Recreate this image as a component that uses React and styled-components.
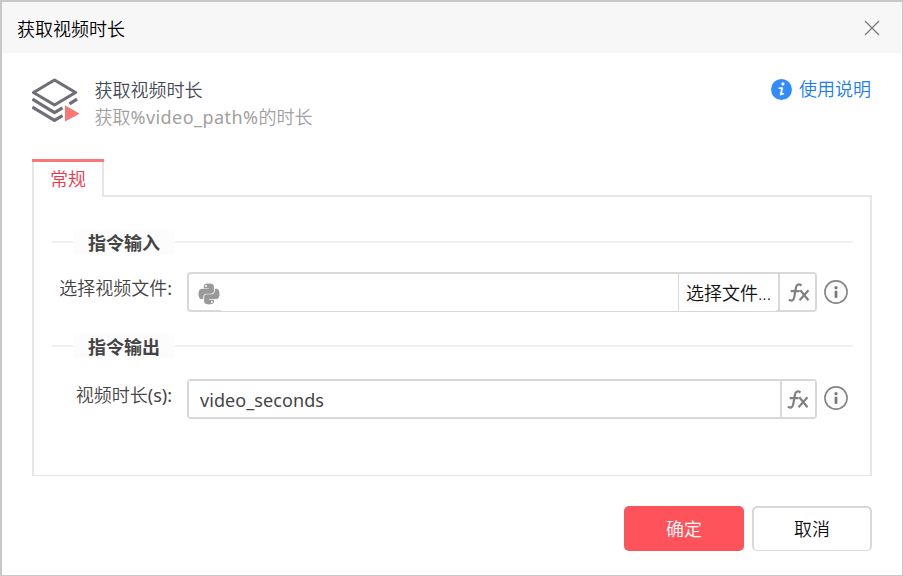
import React from "react";
import styled, { createGlobalStyle } from "styled-components";
import { FaPython } from "react-icons/fa";

const Global = createGlobalStyle`
  * { box-sizing: border-box; }
  body {
    margin: 0;
    background: #fff;
    font-family: "Noto Sans", "Noto Sans CJK SC", sans-serif;
    font-size: 18px;
    line-height: 24px;
    color: #444;
    white-space: nowrap;
  }
  button, input { font: inherit; }
`;

const Dialog = styled.div`
  width: 903px;
  height: 576px;
  background: #fff;
  border: solid #c8c8c8;
  border-width: 2px 1px 1px 2px;
  font-weight: 350;
`;

const TitleBar = styled.header`
  display: flex;
  align-items: center;
  justify-content: space-between;
  height: 51px;
  padding: 2px 22px 0 15px;
  background: #f7f7f7;
  color: #000;
`;

const CloseButton = styled.button`
  display: flex;
  padding: 0;
  margin-top: -1px;
  border: 0;
  background: none;
  color: #777;
`;

const Summary = styled.section`
  display: flex;
  height: 106px;
  padding: 24px 31px 0 30px;
`;

const SummaryText = styled.div`
  flex: 1;
  margin-left: 14.5px;
`;

const Name = styled.div`
  height: 28px;
  padding-top: 1px;
  color: #444955;
`;

const Description = styled.div`
  color: #a0a0a0;
`;

const Latin = styled.span`
  font-weight: 400;
  letter-spacing: ${(p) => p.$tracking || 0}px;
`;

const HelpLink = styled.a`
  display: flex;
  align-items: center;
  gap: 7px;
  height: 24px;
  color: #1a7df5;
`;

const Tabs = styled.div`
  display: flex;
  height: 38px;
  margin: 0 30px;
`;

const Tab = styled.div`
  width: 72px;
  text-align: center;
  color: #f0344a;
  line-height: 34px;
  border-top: 3px solid #fb7676;
  background: linear-gradient(#e6e6e6, #e6e6e6) left / 2px 100% no-repeat,
    linear-gradient(#e6e6e6, #e6e6e6) right / 2px 100% no-repeat;
`;

const TabRule = styled.div`
  flex: 1;
  border-bottom: 2px solid #e6e6e6;
`;

const Panel = styled.main`
  height: 279px;
  margin: 0 30px;
  padding: 33px 17px 0 18px;
  border: solid #e6e6e6;
  border-width: 0 2px 1px 2px;
`;

const SectionTitle = styled.h2`
  display: flex;
  align-items: center;
  height: 24px;
  margin: 0;
  font-size: 18px;
  font-weight: 700;

  &::before,
  &::after {
    content: "";
    height: 2px;
    background: #f0f0f0;
  }
  &::before { width: 21px; }
  &::after { flex: 1; }
`;

const SectionLabel = styled.span`
  width: 102px;
  height: 24px;
  line-height: 26px;
  text-align: center;
  background: #fcfcfc;
`;

const Row = styled.div`
  display: flex;
  align-items: center;
  height: 40px;
  margin: ${(p) => p.$margin};
`;

const Label = styled.label`
  width: 120px;
  margin: -8px 15px 0 0;
  text-align: right;
`;

const Field = styled.div`
  display: flex;
  width: 630px;
  height: 40px;
  border: 2px solid #d8d8d8;
  border-radius: 4px;
  background: #fff;
`;

const PythonBadge = styled.div`
  width: 32px;
  padding: 8px 0 0 8px;
  color: #999;
`;

const Value = styled.input`
  flex: 1;
  min-width: 0;
  padding: ${(p) => (p.$flush ? "0" : "2px 0 0 11px")};
  border: 0;
  outline: 0;
  background: #fff;
  color: #444;
  font-weight: 400;
  letter-spacing: 0.08px;
  margin-bottom: ${(p) => (p.$flush ? "-1px" : "0")};
`;

const Browse = styled.button`
  width: 100px;
  margin-bottom: -1px;
  padding: 1px 0 0;
  border: 0;
  border-left: 1px solid #d8d8d8;
  border-bottom-right-radius: 4px;
  background: #fff;
  color: #111;
`;

const Formula = styled.button`
  display: flex;
  align-items: flex-start;
  width: ${(p) => p.$width}px;
  padding: 8px 0 0 ${(p) => p.$indent}px;
  border: 0;
  border-left: 2px solid #d8d8d8;
  background: #fff;
  color: #808080;
`;

const Info = styled.svg`
  margin: ${(p) => p.$shift}px 0 0 7px;
`;

const Footer = styled.footer`
  display: flex;
  justify-content: flex-end;
  gap: 8px;
  padding: 30px 30px 0;
`;

const Action = styled.button`
  width: 120px;
  height: 45px;
  padding: 0;
  border-radius: 5px;
  border: ${(p) => (p.$primary ? "0" : "solid #d9d9d9")};
  border-width: ${(p) => (p.$primary ? "0" : "2px 2px 1px 2px")};
  background: ${(p) => (p.$primary ? "#ff535c" : "#fff")};
  color: ${(p) => (p.$primary ? "#fff" : "#111")};
`;

function LayersIcon() {
  return (
    <svg width="48" height="48" viewBox="0 -1 48 48" fill="none">
      <g stroke="#6f6e78" strokeWidth="3.2" strokeLinejoin="round">
        <path d="M22.5 2 43.5 14.5 22.5 27 1.5 14.5Z" />
        <path d="M0.4 21.2 22.5 34.6 30.5 29.8M37.5 25.8 45 21.2" />
        <path d="M0.4 29 22.5 42.3 30.5 37.7" />
      </g>
      <path d="M33 27.3 47.5 35.7 33 43.5Z" fill="#fb7676" />
    </svg>
  );
}

function HelpIcon() {
  return (
    <svg width="21" height="21" viewBox="0 0 21 21">
      <circle cx="10.5" cy="10.5" r="10.5" fill="#348bff" />
      <circle cx="11.9" cy="4.9" r="1.6" fill="#fff" />
      <path d="M8.4 9.2h2.8L9.7 15.5l2.6-.8" fill="none" stroke="#fff" strokeWidth="1.8" strokeLinecap="round" strokeLinejoin="round" />
    </svg>
  );
}

function InfoIcon({ shift = -1 }) {
  return (
    <Info $shift={shift} width="24" height="24" viewBox="0 0 24 24">
      <circle cx="12" cy="12" r="11.1" fill="#fafafa" stroke="#858585" strokeWidth="1.6" />
      <circle cx="12" cy="7.7" r="1.6" fill="#777" />
      <path d="M12 10.8v7" stroke="#777" strokeWidth="2.7" />
    </Info>
  );
}

function FormulaIcon() {
  return (
    <svg width="22" height="22" viewBox="0 0 22 22" fill="none" stroke="currentColor" strokeWidth="2.2">
      <path d="M13.5 3.6C10.5 1.3 8.3 2.8 7.9 5.8L6.2 15.4C5.7 18.6 3.2 19.3.8 17.7" />
      <path d="M2.7 9.1H11.5M12.3 8.3 20.5 18.2M20.5 8.3 11.6 18.2" />
    </svg>
  );
}

export default function App() {
  return (
    <>
      <Global />
      <Dialog>
        <TitleBar>
          <span>获取视频时长</span>
          <CloseButton aria-label="关闭">
            <svg width="16" height="16" viewBox="0 0 16 16" stroke="currentColor" strokeWidth="1.2">
              <path d="M1 1 15 15M15 1 1 15" />
            </svg>
          </CloseButton>
        </TitleBar>
        <Summary>
          <LayersIcon />
          <SummaryText>
            <Name>获取视频时长</Name>
            <Description>获取<Latin $tracking={0.44}>%video_path%</Latin>的时长</Description>
          </SummaryText>
          <HelpLink>
            <HelpIcon />
            使用说明
          </HelpLink>
        </Summary>
        <Tabs>
          <Tab>常规</Tab>
          <TabRule />
        </Tabs>
        <Panel>
          <SectionTitle><SectionLabel>指令输入</SectionLabel></SectionTitle>
          <Row $margin="18px 0 22px">
            <Label>选择视频文件<Latin>:</Latin></Label>
            <Field>
              <PythonBadge><FaPython size={24} /></PythonBadge>
              <Value $flush />
              <Browse>选择文件...</Browse>
              <Formula $width={37} $indent={8} aria-label="公式"><FormulaIcon /></Formula>
            </Field>
            <InfoIcon />
          </Row>
          <SectionTitle><SectionLabel>指令输出</SectionLabel></SectionTitle>
          <Row $margin="21px 0 0">
            <Label>视频时长<Latin>(s):</Latin></Label>
            <Field>
              <Value defaultValue="video_seconds" />
              <Formula $width={35} $indent={5} aria-label="公式"><FormulaIcon /></Formula>
            </Field>
            <InfoIcon shift={-3} />
          </Row>
        </Panel>
        <Footer>
          <Action $primary>确定</Action>
          <Action>取消</Action>
        </Footer>
      </Dialog>
    </>
  );
}
